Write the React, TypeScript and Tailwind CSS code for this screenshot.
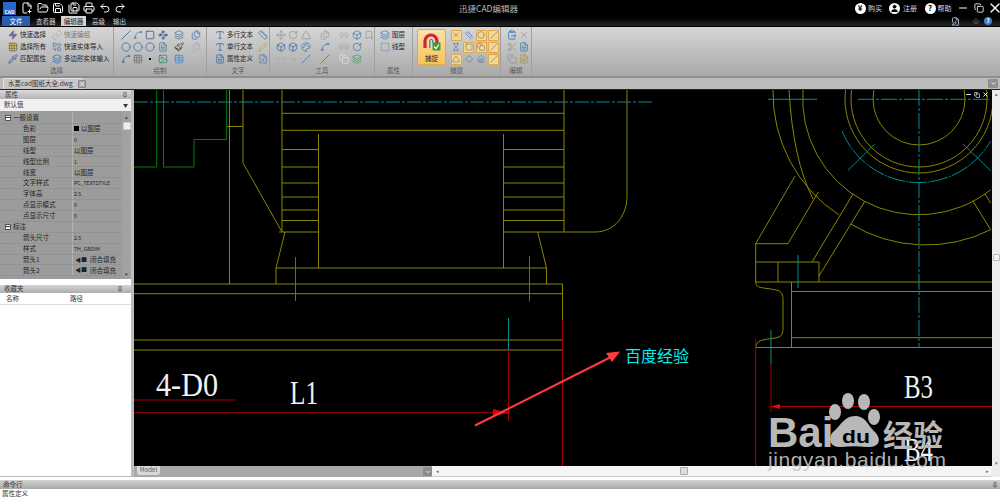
import React from "react";
import {
  FilePlus2, FolderOpen, Save, SaveAll, Printer, Undo2, Redo2, User, Minus, Copy, X, Slash, Spline, Square, Waypoints, Layers,
  Circle, FileText, Paintbrush, Grid3x3, Image, Table, Move, RotateCw, Triangle, Pencil, Scissors, ClipboardPaste, Files, Type, Pipette,
  Zap, Palette, Combine, ChevronDown, Pin, Home, FileEdit, Box, Link, Link2, Bookmark, SquareDashed, Diamond, Hourglass, Ruler,
} from "lucide-react";

const Ic = ({ children }: { children?: React.ReactNode }) => (
  <div className="flex h-[12px] items-center justify-center">{children}</div>
);
const s = { size: 10, strokeWidth: 1.6 };
const q = { size: 12, strokeWidth: 2 };

const Lab = ({ icon, text }: { icon: React.ReactNode; text: string }) => (
  <div className="flex h-[12px] items-center gap-[2px] whitespace-nowrap text-[6.5px] text-[#222]">
    <span className="flex w-[10px] justify-center">{icon}</span>
    <span>{text}</span>
  </div>
);

const Group = ({ w, title, children, className }: { w: string; title: string; children: React.ReactNode; className?: string }) => (
  <div className={`flex flex-col border-r border-[#a0a0a0] ${w}`}>
    <div className={`h-[38px] pt-[2px] ${className ?? ""}`}>{children}</div>
    <div className="flex h-[11px] items-center justify-center text-[6.5px] text-[#5a5a5a]">{title}</div>
  </div>
);

const Snap = ({ on, children }: { on?: boolean; children: React.ReactNode }) => (
  <div className="flex h-[12px] items-center justify-center">
    <div className={`flex h-[11px] w-[11px] items-center justify-center rounded-[1px] ${on ? "border border-[#e2a84a] bg-[#f9d68a]" : ""}`}>{children}</div>
  </div>
);
const sn = { size: 8, strokeWidth: 1.6, color: "#3f6fa8" };

const Row = ({ label, value, icon, group, latin }: { label: string; value?: string; icon?: React.ReactNode; group?: boolean; latin?: boolean }) => (
  <div className="flex h-[10.9px] items-center border-b border-dotted border-[#8a8a8a] text-[6.5px] text-[#222]">
    <div className={`flex h-full w-[73px] shrink-0 items-center border-r border-[#b4b4b4] ${group ? "pl-[5px]" : "pl-[23px]"}`}>
      {group && <span className="mr-[2px] flex h-[6px] w-[6px] items-center justify-center border border-[#555] bg-white"><span className="h-px w-[4px] bg-[#333]" /></span>}
      {label}
    </div>
    <div className={`flex items-center gap-[2px] pl-[1px] whitespace-nowrap ${latin ? "text-[5.2px]" : ""}`}>{icon}{value}</div>
  </div>
);

const Y = "#8a8600", T = "#008f8f", G = "#008000", R = "#a80000";

function Drawing() {
  const hs = [149.5, 167, 183, 197, 210, 220.5];
  return (
    <svg viewBox="134 90 858 376" className="block h-[376px] w-[858px] shrink-0 bg-black" fill="none" strokeWidth={1}>
      <g stroke={G}>
        <path d="M134 167H156.7V90M163.5 90V167H194V139.5H226.7V90" />
      </g>
      <g stroke={Y}>
        <path d="M229.5 90V284M227 126.5H243M243 90V163L282 232V90M564 90V232M282 113.3H564M282 130.3H564" />
        <path d="M318.5 134V268M503.5 134V268M279 232H318.5M503.5 232H595C615 232 627 215 627 196V90" />
        {hs.map((y) => <path key={y} d={`M282 ${y}H318.5M503.5 ${y}H564`} />)}
        <path d="M285 232L276 268V284M537.7 232L546.5 268V284M276 268H546.5" />
        <path d="M134 284H562.5V320M134 293.7H562.5M134 340H562.5M134 350H562.5" />
        <circle cx="919" cy="99" r="46" />
        <circle cx="919" cy="99" r="68" />
        <circle cx="919" cy="99" r="74" />
        <path d="M803 90A116 116 0 0 0 990.7 189.7" />
        <path d="M789 90Q793 160 813 199" />
        <path d="M773 90A146 146 0 0 0 839 215" />
        <path d="M850.7 224A145 145 0 0 0 990.7 229.7" />
        <path d="M795 176L755.7 243.7V282M755.7 243.7H788L818.3 192M755.7 262H819V282M778 262V282M853 194L812 262M865 201L819 276" />
        <path d="M755.7 282H992M791.5 291.5H992M791.5 282V347.5M791.5 337.7H992M755.7 347.5H992" />
        <path d="M755.7 282C756 289 762 287 776 290C782 291 783 295 783 300V328C783 335 781 337 775 338C762 340 756 340 755.7 347.5" />
        <path d="M972.7 200.7L990.7 229.7M985 194L990.7 203" />
      </g>
      <g stroke={T}>
        <path d="M134 102H653" strokeDasharray="14 2 3 2" />
        <path d="M295.5 257V301M529.5 256V301.5M508.5 318V350M771 330V364M798 255V288" />
        <path d="M919 90V347" strokeDasharray="16 2 3 2" />
        <path d="M768 99.3H817" />
        <path d="M858 99.3H990" strokeDasharray="16 2 3 2" />
        <path d="M842 131A83 83 0 0 0 990.7 141" strokeDasharray="18 1 2 1" />
        <path d="M847.7 170.7L874.7 144M963 144L990.7 170.7" />
      </g>
      <g stroke={R}>
        <path d="M562.5 320V466M508.5 350V421M134 412.7H508M134 400H235M771 364V412M755.7 339V466M771 406.5H992" />
        <path d="M493 409L508 412.7L493 416Z" fill="#e00000" stroke="none" />
        <path d="M771 406.5L780 404V409Z" fill="#ff0000" stroke="none" />
      </g>
      <path d="M475 425.5L504 411L612 356.5" stroke="#ff3b3b" strokeWidth="2" />
      <path d="M620 351.5L606 353L612 362Z" fill="#ff3b3b" />
      <g fill="#f2f2f2" fontFamily="'Liberation Serif', serif">
        <text x="156" y="396" fontSize="33" textLength="62" lengthAdjust="spacingAndGlyphs">4-D0</text>
        <text x="290" y="404" fontSize="33" textLength="28" lengthAdjust="spacingAndGlyphs">L1</text>
        <text x="904" y="398" fontSize="33" textLength="29" lengthAdjust="spacingAndGlyphs">B3</text>
        <text x="904" y="461" fontSize="33" textLength="29" lengthAdjust="spacingAndGlyphs">B4</text>
      </g>
      <text x="625" y="362" fontSize="16" fill="#00f0f0" fontFamily="'Noto Sans CJK SC', sans-serif">百度经验</text>
    </svg>
  );
}

export default function App() {
  return (
    <div className="relative flex h-[498px] w-[1000px] flex-col overflow-hidden bg-white font-['Noto_Sans_CJK_SC',sans-serif]">
      {/* title */}
      <div className="h-[27px] shrink-0 border-b border-black bg-gradient-to-b from-black from-50% to-[#262626]">
        <div className="flex h-[16px] items-center">
          <div className="ml-[3px] flex h-[13px] w-[13px] items-end justify-center bg-[#2b66c8] text-[5px] font-bold leading-[7px] text-white">CAD</div>
          <div className="ml-[5px] flex w-[105px] items-center justify-between text-white">
            <FilePlus2 {...q} /><FolderOpen {...q} /><Save {...q} /><SaveAll {...q} /><Printer {...q} /><Undo2 {...q} /><Redo2 {...q} />
          </div>
          <div className="ml-[333px] w-[66px] whitespace-nowrap text-[8.5px] text-[#b8b8b8]">迅捷CAD编辑器</div>
          <div className="ml-auto flex items-center text-[7px] text-[#dcdcdc]">
            <span className="mr-[2.5px] flex h-[11px] w-[11px] items-center justify-center rounded-full bg-white text-[8px] font-bold text-black">¥</span>购买
            <span className="mr-[3.5px] ml-[6.5px] flex h-[11px] w-[11px] items-center justify-center rounded-full bg-white"><User size={9} fill="#000" color="#000" /></span>注册
            <span className="mr-[2px] ml-[7.5px] flex h-[11px] w-[11px] items-center justify-center rounded-full bg-white text-[8px] font-bold text-black">?</span>帮助
            <Minus size={12} className="ml-[5px] text-white" />
            <Copy size={10} className="ml-[5px] text-white" />
            <X size={16} className="-mr-[3px] ml-[3.5px] text-white" />
          </div>
        </div>
        <div className="flex h-[10px] items-end text-[6.5px] leading-[10px] text-[#cfcfcf]">
          <div className="ml-[2px] h-[10px] w-[28px] bg-[#2a5cb0] text-center text-white">文件</div>
          <div className="ml-[6px] w-[18px] text-center whitespace-nowrap">查看器</div>
          <div className="ml-[7px] h-[10px] w-[25px] bg-[#d4d4d4] text-center text-[#222]">编辑器</div>
          <div className="ml-[6px] w-[12px] text-center whitespace-nowrap">高级</div>
          <div className="ml-[9px] w-[13px] text-center whitespace-nowrap">输出</div>
          <div className="ml-auto flex h-[10px] items-center pr-[8px]">
            <FileEdit size={9} className="text-[#cfe0f0]" />
            <Home size={6} className="ml-[13px] text-[#777]" />
            <span className="ml-[5px] flex h-[8px] w-[8px] items-center justify-center rounded-full bg-[#3f7fd0] text-[6px] font-bold text-white">?</span>
          </div>
        </div>
      </div>

      {/* ribbon */}
      <div className="flex h-[49px] shrink-0 bg-gradient-to-b from-[#d6d6d6] to-[#a9a9a9]">
        <Group w="w-[114px]" title="选择" className="grid grid-cols-[44px_1fr] pl-[8px]">
          <div>
            <Lab icon={<Zap {...s} color="#c03a5a" fill="#3a78c8" />} text="快速选择" />
            <Lab icon={<Grid3x3 {...s} color="#555" fill="#e8d060" />} text="选择所有" />
            <Lab icon={<Pipette {...s} color="#30408a" />} text="匹配属性" />
          </div>
          <div>
            <div className="opacity-50"><Lab icon={<Link {...s} color="#888" />} text="快速编组" /></div>
            <Lab icon={<Combine {...s} color="#2f6fb5" />} text="快速实体导入" />
            <Lab icon={<Layers {...s} color="#1f5fb0" />} text="多边形实体输入" />
          </div>
        </Group>
        <Group w="w-[93px]" title="绘制" className="grid grid-cols-[12px_12px_12px_14px_18px_16px] content-start pl-[6px]">
          <Ic><Slash {...s} color="#1d3f78" /></Ic><Ic><Spline {...s} color="#2f6fb5" /></Ic><Ic><Square {...s} color="#1d3f78" /></Ic><Ic><Waypoints {...s} color="#1d3f78" /></Ic><Ic><Layers {...s} color="#3a6aa8" /></Ic><Ic><Files {...s} color="#2f6fb5" /></Ic>
          <Ic><Circle {...s} color="#1f5fb0" /></Ic><Ic><Circle {...s} color="#1f5fb0" /></Ic><Ic><Circle {...s} color="#1f5fb0" /></Ic><Ic><FileText {...s} color="#3a6aa8" /></Ic><Ic><Paintbrush {...s} color="#222" /></Ic><Ic><Files {...s} color="#a8a8a8" /></Ic>
          <Ic><Spline {...s} color="#3a5a90" /></Ic><Ic><Grid3x3 {...s} color="#666" /></Ic><Ic><span className="h-[2px] w-[2px] bg-black" /></Ic><Ic><Image {...s} color="#1f7a6a" /></Ic><Ic><Table {...s} color="#2f7fd0" /></Ic><Ic />
        </Group>
        <Group w="w-[63px]" title="文字" className="grid grid-cols-[42px_12px] pl-[8px]">
          <div>
            <Lab icon={<Type {...s} color="#1f5fb0" />} text="多行文本" />
            <Lab icon={<Type {...s} color="#1f5fb0" />} text="单行文本" />
            <Lab icon={<FileText {...s} color="#1f5fb0" />} text="属性定义" />
          </div>
          <div>
            <Ic><Ruler {...s} color="#1f5fb0" /></Ic>
            <Ic><Pencil {...s} color="#c8a020" /></Ic>
            <Ic><FileEdit {...s} color="#3a6aa8" /></Ic>
          </div>
        </Group>
        <Group w="w-[105px]" title="工具" className="grid grid-cols-[12px_12px_14px_24px_13px_13px_12px] content-start pl-[5px]">
          <Ic><Move {...s} color="#8d8d8d" /></Ic><Ic><RotateCw {...s} color="#8d8d8d" /></Ic><Ic><Triangle {...s} color="#8d8d8d" /></Ic><Ic><Files {...s} color="#999" /></Ic><Ic><Link2 {...s} color="#999" /></Ic><Ic><Box {...s} color="#2f6fb5" /></Ic><Ic><Bookmark {...s} color="#8d8d8d" /></Ic>
          <Ic><Box {...s} color="#1f5fb0" /></Ic><Ic><Box {...s} color="#1f5fb0" /></Ic><Ic><Palette {...s} color="#2f6fb5" /></Ic><Ic><Spline {...s} color="#2f6fb5" /></Ic><Ic><Link2 {...s} color="#999" /></Ic><Ic><RotateCw {...s} color="#2f6fb5" /></Ic><Ic />
          <Ic><span className="text-[6px] leading-none text-[#999]">··</span></Ic><Ic><span className="text-[6px] leading-none text-[#999]">-ı</span></Ic><Ic><Slash {...s} color="#3a6aa8" /></Ic><Ic><Slash {...s} color="#3a6aa8" /></Ic><Ic><Copy {...s} color="#eee" /></Ic><Ic><Layers {...s} color="#2e9a5a" /></Ic><Ic />
        </Group>
        <Group w="w-[38px]" title="属性" className="pl-[5px]">
          <Lab icon={<Layers {...s} color="#2f6fb5" />} text="图层" />
          <Lab icon={<SquareDashed {...s} color="#2f6fb5" />} text="线型" />
        </Group>
        <Group w="w-[88px]" title="捕捉" className="flex pl-[4px]">
          <div className="flex h-[36px] w-[30px] flex-col items-center rounded-[2px] border border-[#e0a748] bg-gradient-to-b from-[#fbe2a6] to-[#f7c25c] pt-[3px] text-[6.5px] text-[#222]">
            <svg width="18" height="18" viewBox="0 0 18 18" fill="none">
              <path d="M2 15V8a6 6 0 0 1 12 0v2" stroke="#c8283c" strokeWidth="3.2" />
              <path d="M6.8 15V8a1.5 1.5 0 0 1 3 0v2" stroke="#3f6fd0" strokeWidth="1.2" />
              <rect x="9.5" y="9.5" width="8" height="8" rx="1" fill="#3d9a3d" />
              <path d="M11 13.5l2 2 3-4" stroke="#fff" strokeWidth="1.2" />
            </svg>
            <span className="mt-[3px]">捕捉</span>
          </div>
          <div className="ml-[4px] grid grid-cols-[12.5px_12.5px_12.5px_12.5px] content-start">
            <Snap on><X {...sn} /></Snap><Snap><Ruler {...sn} /></Snap><Snap on><Circle {...sn} /></Snap><Snap on><Slash {...sn} /></Snap>
            <Snap><Hourglass {...sn} /></Snap><Snap on><Square {...sn} /></Snap><Snap on><Copy {...sn} /></Snap><Snap on><Slash {...sn} /></Snap>
            <Snap on><Triangle {...sn} /></Snap><Snap><Diamond {...sn} /></Snap><Snap><Home {...sn} /></Snap><Snap on><Slash {...sn} /></Snap>
          </div>
        </Group>
        <Group w="w-[31px]" title="编辑" className="grid grid-cols-[12px_12px] content-start pl-[5px]">
          <Ic><ClipboardPaste {...s} color="#1f5fb0" /></Ic><Ic><X {...s} color="#909090" /></Ic>
          <Ic><Scissors {...s} color="#909090" /></Ic><Ic><FileText {...s} color="#1f6fb0" /></Ic>
          <Ic><Copy {...s} color="#909090" /></Ic><Ic><FileText {...s} color="#a89020" /></Ic>
        </Group>
      </div>
      <div className="h-[2px] shrink-0 bg-[#8e8e8e]" />

      {/* doc tabs */}
      <div className="flex h-[12px] shrink-0 items-end border-b border-[#222] bg-[#bcbcbc] pl-[3px]">
        <div className="flex h-[11px] w-[80px] items-center rounded-t-[2px] border border-b-0 border-[#e4e4e4] bg-[#c8c8c8] pl-[4px] text-[6.5px] whitespace-nowrap text-[#333]">
          水泵cad图纸大全.dwg
          <span className="ml-[5px] flex h-[8px] w-[9px] items-center justify-center rounded-[1px] border border-[#888] bg-[#aaa]"><X size={6} color="#fff" strokeWidth={3} /></span>
        </div>
        <div className="mb-px ml-auto mr-[2px] flex h-[9px] w-[10px] items-center justify-center rounded-[1px] bg-[#8f8f8f]"><ChevronDown size={7} color="#fff" strokeWidth={3} /></div>
      </div>

      {/* main */}
      <div className="flex h-[387px] shrink-0">
        <div className="flex w-[134px] shrink-0 flex-col border-r-[3px] border-[#bdbdbd] bg-white">
          <div className="flex h-[9px] items-center justify-between bg-gradient-to-b from-[#dcdcdc] to-[#b4b4b4] pr-[3px] pl-[5px] text-[6.5px] text-[#333]">属性<Pin size={6} color="#333" /></div>
          <div className="flex h-[12px] items-center justify-between bg-[#f0f0f0] pr-[3px] pl-[4px] text-[6.5px] text-[#333]">默认值<span className="text-[5px]">▼</span></div>
          <div className="flex h-[168px]">
            <div className="w-[122px] bg-[#9c9c9c] pt-[2px]">
              <Row group label="一般设置" />
              <Row label="色彩" value="以图层" icon={<span className="h-[5px] w-[5px] bg-black" />} />
              <Row label="图层" value="0" latin />
              <Row label="线型" value="以图层" />
              <Row label="线型比例" value="1" latin />
              <Row label="线宽" value="以图层" />
              <Row label="文字样式" value="PC_TEXTSTYLE" latin />
              <Row label="字体高" value="2.5" latin />
              <Row label="点显示模式" value="0" latin />
              <Row label="点显示尺寸" value="0" latin />
              <Row group label="标注" />
              <Row label="箭头尺寸" value="2.5" latin />
              <Row label="样式" value="TH_GBDIM" latin />
              <Row label="箭头1" value="闭合填充" icon={<span className="mx-[1px] text-[6px] leading-none">◀■</span>} />
              <Row label="箭头2" value="闭合填充" icon={<span className="mx-[1px] text-[6px] leading-none">◀■</span>} />
            </div>
            <div className="flex w-[9px] flex-col items-center bg-[#a2a2a2] text-[5px] leading-[11px] text-[#333]">
              <span className="h-[11px]">▴</span>
              <div className="h-[8px] w-[8px] rounded-[1px] border border-[#ccc] bg-[#eee]" />
              <span className="mt-auto">▾</span>
            </div>
          </div>
          <div className="h-[6px]" />
          <div className="flex h-[8px] items-center justify-between bg-gradient-to-b from-[#d4d4d4] to-[#aeaeae] pr-[8px] pl-[4px] text-[6.5px] text-[#333]">收藏夹<Pin size={6} color="#333" /></div>
          <div className="flex h-[12px] items-center border-b border-[#ddd] pl-[6px] text-[6.5px] text-[#333]">
            <span className="w-[64px]">名称</span><span>路径</span>
          </div>
          <div className="min-h-0 flex-1 border-b border-[#bbb]" />
        </div>
        <div className="flex h-[387px] w-[858px] shrink-0 flex-col">
          <Drawing />
          <div className="flex h-[11px] shrink-0">
            <div className="flex h-[11px] w-[298px] shrink-0 items-start bg-[#a8a8a8] pl-[3px]">
              <div className="h-[9px] w-[23px] rounded-b-[3px] bg-[#d8d8d8] text-center text-[6px] leading-[8px] text-[#555]">Model</div>
              <div className="mt-[1px] ml-auto flex h-[9px] w-[9px] items-center justify-center rounded-[1px] bg-[#8c8c8c]"><ChevronDown size={6} color="#fff" strokeWidth={3} /></div>
            </div>
            <div className="flex h-[11px] flex-1 items-center border-b border-[#ccc] bg-[#f4f4f4] pl-[4px]">
              <span className="text-[5px] text-[#666]">◂</span>
              <div className="ml-[241px] h-[8px] w-[8px] rounded-[1px] border border-[#aaa] bg-[#ddd]" />
              <span className="ml-auto pr-[3px] text-[5px] text-[#666]">▸</span>
            </div>
          </div>
        </div>
        <div className="flex w-[8px] shrink-0 flex-col items-center bg-[#ededed] text-[5px] text-[#666]">
          <span className="h-[164px]">▴</span>
          <div className="h-[7px] w-[7px] rounded-[1px] border border-[#bbb] bg-[#f6f6f6]" />
          <span className="mt-auto mb-[11px]">▾</span>
        </div>
      </div>

      <div className="h-[3px] shrink-0 bg-white" />
      <div className="flex h-[9px] shrink-0 items-center justify-between bg-gradient-to-b from-[#d2d2d2] to-[#a8a8a8] pr-[2px] pl-[3px] text-[6.5px] text-[#333]">命令行<Pin size={6} color="#333" /></div>
      <div className="flex-1 pl-[2px] text-[6.5px] leading-[9px] text-[#333]">属性定义</div>

      {/* window buttons over the drawing */}
      <div className="absolute top-[91px] left-[965px] flex items-center gap-[2px] text-white">
        <Minus size={7} strokeWidth={3} /><Copy size={6} strokeWidth={2.5} /><X size={7} strokeWidth={3} />
      </div>

      {/* Baidu watermark */}
      <svg className="pointer-events-none absolute top-0 left-0" width="1000" height="498" viewBox="0 0 1000 498">
        <g fill="#b8b8b8">
          <ellipse cx="848" cy="401" rx="6" ry="8" />
          <ellipse cx="864" cy="402" rx="6" ry="8" />
          <ellipse cx="835" cy="412" rx="6" ry="8" />
          <ellipse cx="874" cy="417" rx="6" ry="8" />
          <path d="M855 416C866 416 868 426 875 432C883 441 878 448 866 447C858 446 850 446 842 447C830 448 828 440 832 433C840 427 844 416 855 416Z" />
          <text x="768" y="447" fontSize="42" fontWeight="bold" fontFamily="'Liberation Sans', sans-serif">Bai</text>
          <text x="883" y="446" fontSize="30" fontWeight="bold" fontFamily="'Noto Sans CJK SC', sans-serif">经验</text>
          <text x="768" y="467" fontSize="21" fontFamily="'Liberation Sans', sans-serif" textLength="178" fill="#c8c8c8" fillOpacity="0.9">jingyan.baidu.com</text>
        </g>
        <text x="842" y="443" fontSize="19" fontWeight="bold" fill="#000" textLength="28" lengthAdjust="spacingAndGlyphs" fontFamily="'Liberation Sans', sans-serif">du</text>
      </svg>
    </div>
  );
}
